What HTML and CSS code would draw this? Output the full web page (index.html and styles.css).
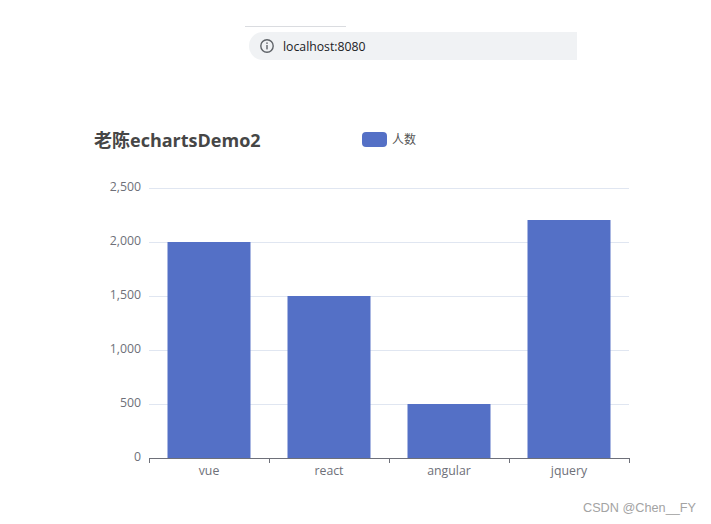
FILE: index.html
```html
<!DOCTYPE html>
<html lang="zh">
<head>
<meta charset="utf-8">
<title>echarts</title>
<link rel="stylesheet" href="styles.css">
</head>
<body>
<div class="browser">
  <div class="tab-line"></div>
  <div class="address">
    <svg class="info" width="14" height="14" viewBox="0 0 14 14"><circle cx="7" cy="7" r="6.2" fill="none" stroke="#5f6368" stroke-width="1.4"/><rect x="6.3" y="6" width="1.4" height="4.4" fill="#5f6368"/><rect x="6.3" y="3.4" width="1.4" height="1.5" fill="#5f6368"/></svg>
    <span class="url">localhost:8080</span>
  </div>
</div>
<svg class="chart" width="711" height="464" viewBox="0 60 711 464">
  <text class="title" x="94" y="147">老陈echartsDemo2</text>
  <rect class="swatch" x="362" y="132" width="25" height="15" rx="4"/>
  <text class="legend" x="392" y="143.5">人数</text>
  <g class="grid">
    <path d="M149 188.5H629M149 242.5H629M149 296.5H629M149 350.5H629M149 404.5H629"/>
  </g>
  <g class="ylabels">
    <text x="141" y="191">2,500</text>
    <text x="141" y="245">2,000</text>
    <text x="141" y="299">1,500</text>
    <text x="141" y="353">1,000</text>
    <text x="141" y="407">500</text>
    <text x="141" y="461">0</text>
  </g>
  <g class="bars">
    <rect x="167.5" y="242" width="83" height="216"/>
    <rect x="287.5" y="296" width="83" height="162"/>
    <rect x="407.5" y="404" width="83" height="54"/>
    <rect x="527.5" y="220" width="83" height="238"/>
  </g>
  <path class="axis" d="M149 458.5H629.5M149.5 458V463M269.5 458V463M389.5 458V463M509.5 458V463M629.5 458V463"/>
  <g class="xlabels">
    <text x="209" y="475">vue</text>
    <text x="329" y="475">react</text>
    <text x="449" y="475">angular</text>
    <text x="569" y="475">jquery</text>
  </g>
</svg>
<div class="watermark">CSDN @Chen__FY</div>
</body>
</html>
```
FILE: styles.css
```css
html, body {
  margin: 0;
  padding: 0;
  background: #fff;
}
body {
  position: relative;
  width: 711px;
  height: 524px;
  overflow: hidden;
  font-family: "Noto Sans CJK SC", "Open Sans", sans-serif;
}
.browser {
  height: 60px;
  padding-top: 26px;
  box-sizing: border-box;
}
.tab-line {
  width: 101px;
  height: 1px;
  margin-left: 245px;
  background: #dadce0;
}
.address {
  display: flex;
  align-items: center;
  width: 328px;
  height: 28px;
  margin: 5px 0 0 249px;
  padding-left: 11px;
  box-sizing: border-box;
  background: #f0f2f4;
  border-radius: 14px 0 0 14px;
}
.info {
  flex: none;
}
.url {
  margin-left: 9px;
  font: 12.25px "Open Sans", sans-serif;
  color: #202124;
}
.chart {
  display: block;
}
.chart text {
  font-family: "Open Sans", "Noto Sans CJK SC", sans-serif;
}
.chart .title {
  font-size: 18px;
  font-weight: 700;
  fill: #464646;
}
.swatch {
  fill: #5470c6;
}
.chart .legend {
  font-size: 12px;
  fill: #555;
}
.grid path {
  fill: none;
  stroke: #e0e6f1;
  stroke-width: 1;
}
.ylabels text {
  font-size: 12.3px;
  fill: #6e7079;
  text-anchor: end;
}
.bars rect {
  fill: #5470c6;
}
.axis {
  fill: none;
  stroke: #6e7079;
  stroke-width: 1;
}
.xlabels text {
  font-size: 12.3px;
  fill: #6e7079;
  text-anchor: middle;
}
.watermark {
  position: absolute;
  right: 15px;
  top: 501px;
  font: 12.7px "Liberation Sans", Arial, sans-serif;
  color: #a3a3a3;
}
```
